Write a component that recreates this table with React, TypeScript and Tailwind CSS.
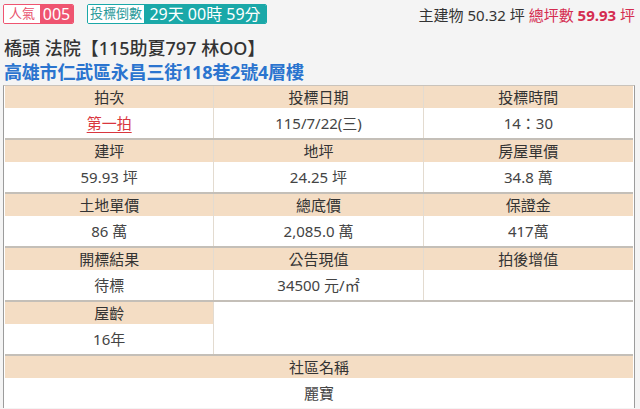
import React from "react";

const FONT = '"Noto Sans", "Noto Sans CJK TC", sans-serif';

type Cell = { label: string; value?: React.ReactNode };

function Row({ cells }: { cells: Cell[] }) {
  return (
    <div className="grid grid-cols-3 border-t-2 border-[#c4bfb8]">
      {cells.map((c, i) => (
        <div
          key={c.label}
          className={i < 2 ? "border-r border-[#e3dbd0]" : ""}
        >
          <div className="h-[22px] bg-[#f4ddc4] flex items-center justify-center text-[15px] text-[#333]">
            {c.label}
          </div>
          <div className="h-[30px] flex items-center justify-center text-[15px] text-[#444]">
            {c.value}
          </div>
        </div>
      ))}
    </div>
  );
}

export default function App() {
  return (
    <div
      className="w-[640px] h-[409px] overflow-hidden bg-[#f4f4f4]"
      style={{ fontFamily: FONT }}
    >
      {/* top badges + area summary */}
      <div className="flex items-center justify-between pt-[4px] pl-[3px] pr-[5px] h-[24px]">
        <div className="flex items-center gap-[13px]">
          <div className="flex h-[20px] rounded-[2px] overflow-hidden border border-[#ef5470]">
            <span className="w-[36px] bg-white text-[#e8506c] text-[13px] flex items-center justify-center">
              人氣
            </span>
            <span className="w-[33px] bg-[#ef5470] text-white text-[16px] flex items-center justify-center">
              005
            </span>
          </div>
          <div className="flex h-[20px] rounded-[2px] overflow-hidden border border-[#1aa8a8]">
            <span className="w-[56px] bg-white text-[#2a9a9a] text-[13px] flex items-center justify-center">
              投標倒數
            </span>
            <span className="w-[122px] bg-[#1aa8a8] text-white text-[16px] flex items-center justify-center">
              29天 00時 59分
            </span>
          </div>
        </div>
        <div className="text-[15px] text-[#333] mt-[2px]">
          主建物 50.32 坪{" "}
          <span className="text-[#d42c50]">
            總坪數 <b>59.93</b> 坪
          </span>
        </div>
      </div>

      <div className="mt-[12px] pl-[4px] text-[18px] leading-[24px] font-medium text-[#333]">
        橋頭 法院【115助夏797 林OO】
      </div>
      <div className="pl-[4px] text-[18px] leading-[24px] font-bold text-[#2b74cf] tracking-[-0.2px]">
        高雄市仁武區永昌三街118巷2號4層樓
      </div>

      {/* detail table */}
      <div className="ml-[3px] mt-[1px] w-[632px] border-x border-t border-x-[#9c9c9c] border-t-[#c9c3bb] bg-white px-[1px]">
        <div className="grid grid-cols-3">
          {[
            { label: "拍次", value: <span className="text-[#d9363e] underline underline-offset-[3px]">第一拍</span> },
            { label: "投標日期", value: "115/7/22(三)" },
            { label: "投標時間", value: "14：30" },
          ].map((c, i) => (
            <div key={c.label} className={i < 2 ? "border-r border-[#e3dbd0]" : ""}>
              <div className="h-[22px] bg-[#f4ddc4] flex items-center justify-center text-[15px] text-[#333]">
                {c.label}
              </div>
              <div className="h-[30px] flex items-center justify-center text-[15px] text-[#444]">
                {c.value}
              </div>
            </div>
          ))}
        </div>
        <Row
          cells={[
            { label: "建坪", value: "59.93 坪" },
            { label: "地坪", value: "24.25 坪" },
            { label: "房屋單價", value: "34.8 萬" },
          ]}
        />
        <Row
          cells={[
            { label: "土地單價", value: "86 萬" },
            { label: "總底價", value: "2,085.0 萬" },
            { label: "保證金", value: "417萬" },
          ]}
        />
        <Row
          cells={[
            { label: "開標結果", value: "待標" },
            { label: "公告現值", value: "34500 元/㎡" },
            { label: "拍後增值", value: "" },
          ]}
        />
        <div className="grid grid-cols-3 border-t-2 border-[#c4bfb8]">
          <div className="border-r border-[#e3dbd0]">
            <div className="h-[22px] bg-[#f4ddc4] flex items-center justify-center text-[15px] text-[#333]">
              屋齡
            </div>
            <div className="h-[30px] flex items-center justify-center text-[15px] text-[#444]">
              16年
            </div>
          </div>
          <div className="col-span-2" />
        </div>
        <div className="border-t-2 border-[#c4bfb8]">
          <div className="h-[22px] bg-[#f4ddc4] flex items-center justify-center text-[15px] text-[#333]">
            社區名稱
          </div>
          <div className="h-[30px] flex items-center justify-center text-[15px] text-[#444]">
            麗寶
          </div>
        </div>
      </div>
    </div>
  );
}
